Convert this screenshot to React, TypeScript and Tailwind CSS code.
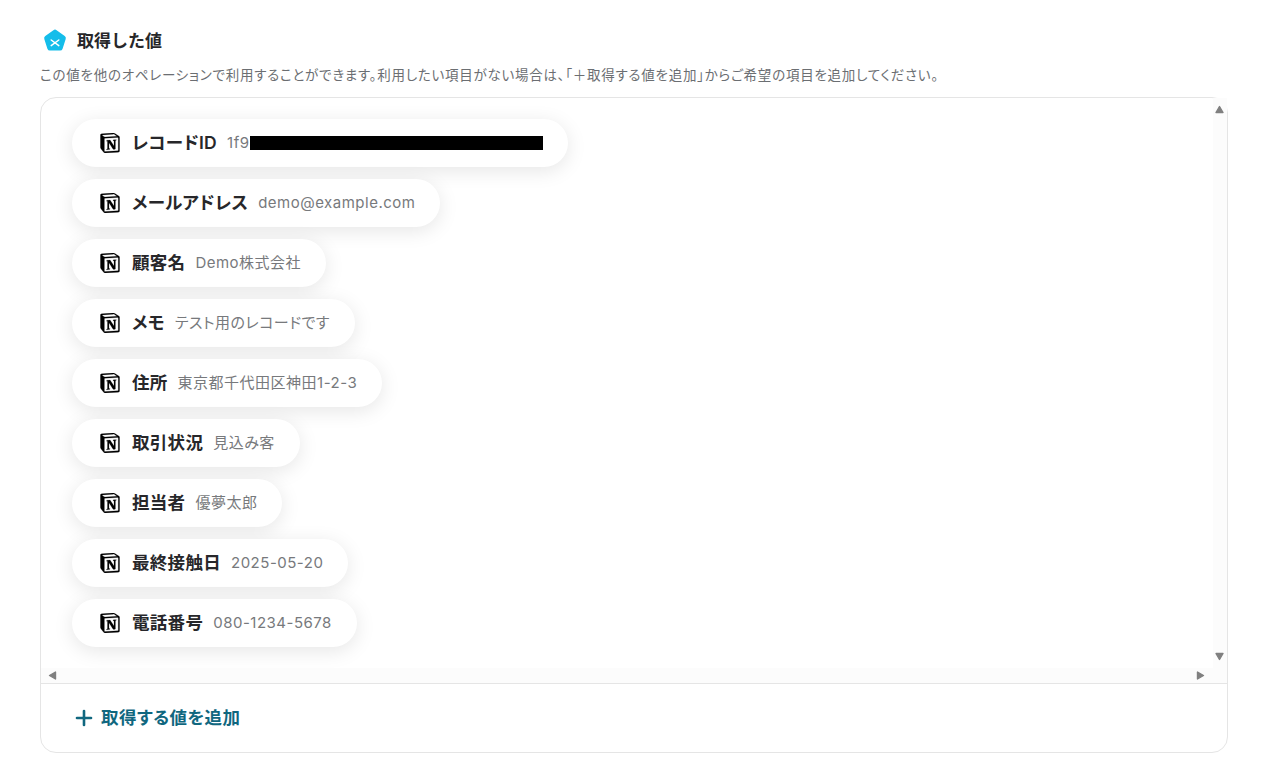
import { Plus } from "lucide-react";
import { SiNotion } from "react-icons/si";

const FONT = "font-['Inter','Noto_Sans_CJK_JP',sans-serif]";

const ROWS = [
  { label: "メールアドレス", value: "demo@example.com" },
  { label: "顧客名", value: "Demo株式会社" },
  { label: "メモ", value: "テスト用のレコードです" },
  { label: "住所", value: "東京都千代田区神田1-2-3" },
  { label: "取引状況", value: "見込み客" },
  { label: "担当者", value: "優夢太郎" },
  { label: "最終接触日", value: "2025-05-20" },
  { label: "電話番号", value: "080-1234-5678" },
];

function Pill({ label, children }: { label: string; children: React.ReactNode }) {
  return (
    <div className="flex h-12 w-fit items-center rounded-full bg-white pl-7 pr-[25px] shadow-[0_4px_20px_rgba(0,0,0,0.1)]">
      <SiNotion className="h-5 w-5 shrink-0 text-black" strokeWidth={0.25} />
      <span className="ml-3 text-[17.5px] font-semibold tracking-[0.3px] text-[#27272a] [font-feature-settings:'palt']">
        {label}
      </span>
      <span className="ml-[10px] flex items-center text-[15px] tracking-[0.5px] text-[#77797c] [font-feature-settings:'palt']">
        {children}
      </span>
    </div>
  );
}

function Triangle({ dir }: { dir: "up" | "down" | "left" | "right" }) {
  const points = {
    up: "1,7.5 4.5,1.5 8,7.5",
    down: "1,1.5 8,1.5 4.5,7.5",
    left: "7.5,1 7.5,8 1.5,4.5",
    right: "1.5,1 1.5,8 7.5,4.5",
  }[dir];
  return (
    <svg width="9" height="9" viewBox="0 0 9 9" className="shrink-0">
      <polygon points={points} fill="#808080" stroke="#808080" strokeWidth="1.4" strokeLinejoin="round" />
    </svg>
  );
}

export default function App() {
  return (
    <div className={`${FONT} min-h-screen bg-white pl-10 pr-[33px] pt-[29px]`}>
      <div className="flex items-center gap-[10px] pl-[3px]">
        <svg width="24" height="24" viewBox="0 0 24 24" className="shrink-0">
          <path
            d="M10.4 1.2a2.7 2.7 0 0 1 3.2 0l8.1 5.9a2.7 2.7 0 0 1 1 3l-3.1 9.6a2.7 2.7 0 0 1-2.6 1.9H7a2.7 2.7 0 0 1-2.6-1.9L1.3 10.1a2.7 2.7 0 0 1 1-3z"
            fill="#14bdea"
          />
          <path d="M8.2 11l7.6 5.6M15.8 11l-7.6 5.6" stroke="#fff" strokeWidth="1.5" strokeLinecap="round" />
        </svg>
        <h2 className="text-[17px] font-semibold leading-6 text-[#27272a]">取得した値</h2>
      </div>

      <p className="mt-[12px] text-[13.5px] leading-5 tracking-[0.75px] text-[#6b6e72] [font-feature-settings:'palt']">
        この値を他のオペレーションで利用することができます。利用したい項目がない場合は、「＋取得する値を追加」からご希望の項目を追加してください。
      </p>

      <div className="mt-[12px] h-[656px] rounded-2xl border border-[#e5e5e5] bg-white">
        <div className="flex h-[570px]">
          <div className="flex flex-1 flex-col gap-3 pl-[31px] pt-[21px]">
            <Pill label="レコードID">
              <span>1f9</span>
              <span className="h-[14px] w-[293px] bg-black" />
            </Pill>
            {ROWS.map((row) => (
              <Pill key={row.label} label={row.label}>
                {row.value}
              </Pill>
            ))}
          </div>
          <div className="flex w-[14px] flex-col items-center justify-between bg-[#fcfcfc] py-[7px] pr-px">
            <Triangle dir="up" />
            <Triangle dir="down" />
          </div>
        </div>
        <div className="flex h-[15px] items-center justify-between bg-[#fcfcfc] pl-[7px] pr-[22px]">
          <Triangle dir="left" />
          <Triangle dir="right" />
        </div>
        <div className="flex h-[69px] items-center gap-[5px] border-t border-[#e5e5e5] pl-[31px] text-[#10677f]">
          <Plus className="h-6 w-6" strokeWidth={2.6} />
          <span className="text-[17.5px] font-semibold tracking-[0.4px] [font-feature-settings:'palt']">取得する値を追加</span>
        </div>
      </div>
    </div>
  );
}
